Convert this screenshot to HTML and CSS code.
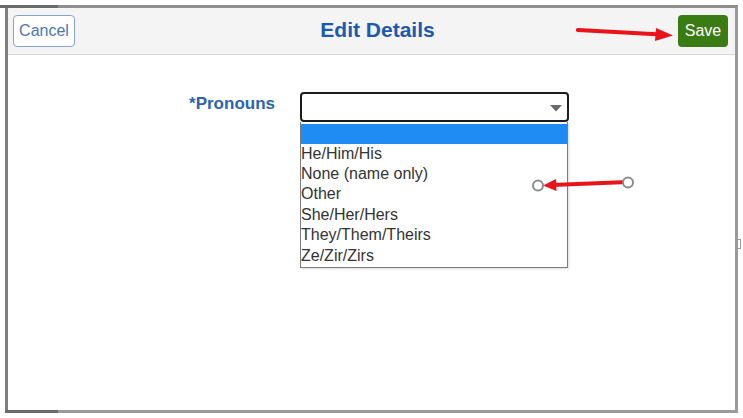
FILE: index.html
```html
<!DOCTYPE html>
<html>
<head>
<meta charset="utf-8">
<link rel="stylesheet" href="styles.css">
</head>
<body>
<div class="frame">
  <div class="header">
    <div class="hleft"><button class="btn-cancel">Cancel</button></div>
    <div class="title">Edit Details</div>
    <div class="hright"><button class="btn-save">Save</button></div>
  </div>
  <div class="content">
    <div class="field">
      <div class="label">*Pronouns</div>
      <div class="select-wrap">
        <div class="select">
          <svg class="caret" width="12" height="7" viewBox="0 0 12 7"><path d="M0 0 H12 L6 6.5 Z" fill="#6a6a6a"/></svg>
        </div>
        <ul class="list">
          <li class="sel">&nbsp;</li>
          <li>He/Him/His</li>
          <li>None (name only)</li>
          <li>Other</li>
          <li>She/Her/Hers</li>
          <li>They/Them/Theirs</li>
          <li>Ze/Zir/Zirs</li>
        </ul>
      </div>
    </div>
  </div>
  <div class="edge-mark"></div>
  <div class="corner-top"></div>
  <div class="corner-bottom"></div>
</div>
<svg class="annot annot-save" width="110" height="20" viewBox="0 0 110 20">
  <path d="M2 4 L85 8.5" stroke="#e8141a" stroke-width="4.2" stroke-linecap="round" fill="none"/>
  <path d="M80 2 L97 9.5 L79 15 Z" fill="#e8141a"/>
</svg>
<svg class="annot annot-list" width="110" height="20" viewBox="0 0 110 20">
  <circle cx="8" cy="10.5" r="5" fill="#fff" stroke="#8c8c8c" stroke-width="2"/>
  <path d="M22 10 L92 7.2" stroke="#e8141a" stroke-width="4" stroke-linecap="round" fill="none"/>
  <path d="M13 10.5 L26 4 L26.5 16 Z" fill="#e8141a"/>
  <circle cx="98" cy="7.5" r="5" fill="#fff" stroke="#8c8c8c" stroke-width="2"/>
</svg>
</body>
</html>
```

FILE: styles.css
```css
html, body {
  margin: 0;
  padding: 0;
  background: #ffffff;
}
body {
  font-family: "Liberation Sans", Arial, sans-serif;
  width: 743px;
  height: 418px;
  position: relative;
  overflow: hidden;
}
.frame {
  position: relative;
  margin: 5px 0 0 5px;
  width: 727px;
  height: 402px;
  border: 3px solid #9a9a9a;
  border-top-color: #8e8e8e;
  border-left-color: #7e7e7e;
  background: #fff;
  display: flex;
  flex-direction: column;
}
.corner-top {
  position: absolute;
  left: -8px;
  top: -3px;
  width: 58px;
  height: 3px;
  background: #6a6a6a;
}
.corner-bottom {
  position: absolute;
  left: -3px;
  bottom: -3px;
  width: 53px;
  height: 3px;
  background: #6a6a6a;
}
.header {
  height: 46px;
  background: #f4f4f4;
  border-bottom: 1px solid #d6d6d6;
  display: grid;
  grid-template-columns: 1fr auto 1fr;
  align-items: center;
  padding: 0 7px 0 5px;
}
.hleft { display: flex; justify-content: flex-start; }
.hright { display: flex; justify-content: flex-end; }
.btn-cancel {
  font-family: "Liberation Sans", Arial, sans-serif;
  font-size: 16px;
  color: #4f75b9;
  background: #fff;
  border: 1px solid #86a2d3;
  border-radius: 4px;
  width: 62px;
  height: 32px;
  padding: 0;
}
.title {
  font-size: 21px;
  font-weight: bold;
  color: #1c59b3;
  margin-left: 14px;
  margin-top: -2px;
}
.btn-save {
  font-family: "Liberation Sans", Arial, sans-serif;
  font-size: 16px;
  color: #ffffff;
  background: #3b7b13;
  border: none;
  border-radius: 4px;
  width: 50px;
  height: 32px;
  padding: 0;
}
.content {
  flex: 1;
  padding-top: 37px;
}
.field {
  display: flex;
  align-items: flex-start;
}
.label {
  width: 267px;
  text-align: right;
  font-size: 17px;
  font-weight: bold;
  color: #2c63b3;
  padding-top: 2px;
  line-height: 20px;
}
.select-wrap {
  position: relative;
  margin-left: 25px;
  width: 269px;
}
.select {
  box-sizing: border-box;
  height: 30px;
  border: 2px solid #1d1d1d;
  border-radius: 4px;
  background: #fff;
  display: flex;
  align-items: center;
  justify-content: flex-end;
  padding-right: 5px;
}
.caret {
  display: block;
  margin-top: 2px;
}
.list {
  position: absolute;
  top: 30px;
  left: 0;
  width: 268px;
  box-sizing: border-box;
  margin: 0;
  padding: 1px 0 1px;
  list-style: none;
  background: #fff;
  border: 1px solid #7d7d7d;
  border-top: none;
  box-shadow: 1px 1px 2px rgba(0,0,0,0.15);
}
.list li {
  font-size: 16px;
  line-height: 20.4px;
  color: #333333;
  padding-left: 0;
  white-space: nowrap;
}
.list li.sel {
  background: #1f8cf4;
  height: 19.5px;
  line-height: 19.5px;
  margin-top: 1px;
}
.edge-mark {
  position: absolute;
  right: -6px;
  top: 231px;
  width: 3px;
  height: 8px;
  border: 1px solid #9a9a9a;
  border-left: none;
}
.annot {
  position: absolute;
}
.annot-save {
  left: 576px;
  top: 26px;
}
.annot-list {
  left: 530px;
  top: 175px;
}
```
